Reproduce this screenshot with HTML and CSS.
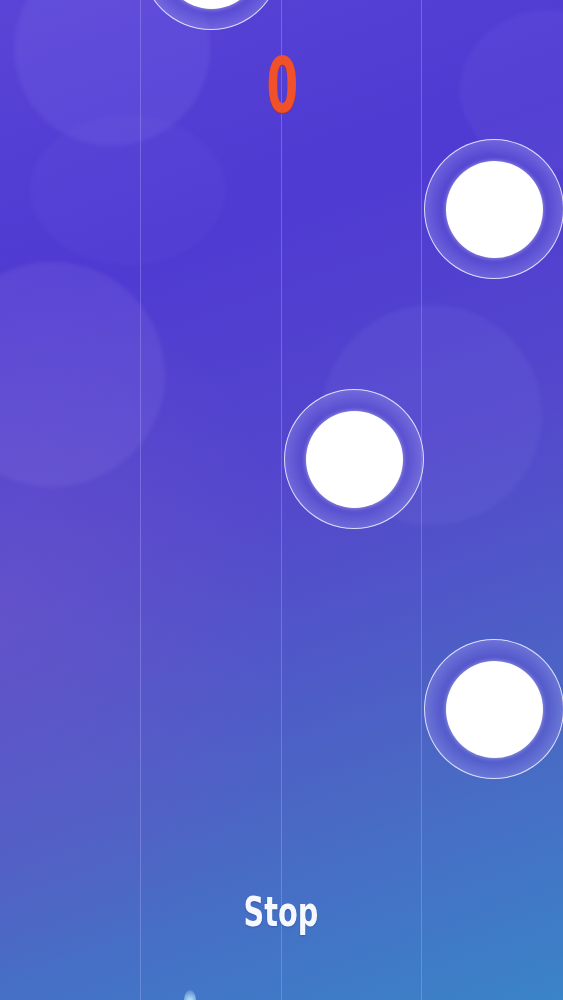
FILE: index.html
```html
<!DOCTYPE html>
<html>
<head>
<meta charset="utf-8">
<link rel="stylesheet" href="styles.css">
</head>
<body>
<div class="stage">
  <div class="bokeh b1"></div>
  <div class="bokeh b2"></div>
  <div class="bokeh b3"></div>
  <div class="bokeh b4"></div>
  <div class="bokeh b5"></div>
  <div class="lanes">
    <div class="lane"></div>
    <div class="lane"></div>
    <div class="lane"></div>
    <div class="lane last"></div>
  </div>
  <div class="note n0"><div class="core"></div></div>
  <div class="note n1"><div class="core"></div></div>
  <div class="note n2"><div class="core"></div></div>
  <div class="note n3"><div class="core"></div></div>
  <div class="score"><span class="digit">0</span></div>
  <div class="stop"><span class="stop-text">Stop</span></div>
  <div class="glow"></div>
</div>
</body>
</html>
```
FILE: styles.css
```css
html, body {
  margin: 0;
  padding: 0;
}
body {
  font-family: "DejaVu Sans", "Liberation Sans", sans-serif;
}
.stage {
  position: relative;
  width: 563px;
  height: 1000px;
  overflow: hidden;
  background:
    radial-gradient(ellipse 420px 520px at 0% 62%, rgba(110, 90, 200, 0.55), rgba(110, 90, 200, 0) 70%),
    linear-gradient(160deg, #5944d6 0%, #4f3ad2 25%, #5448cc 50%, #4b66c4 75%, #3a84c8 100%);
}
.bokeh {
  position: absolute;
  border-radius: 50%;
  background: rgba(140, 130, 240, 0.16);
  filter: blur(2px);
}
.b1 { left: 14px; top: -50px; width: 196px; height: 196px; }
.b2 { left: 30px; top: 115px; width: 196px; height: 150px; background: rgba(140, 130, 240, 0.06); }
.b3 { left: -60px; top: 262px; width: 225px; height: 225px; background: rgba(150, 130, 230, 0.17); }
.b4 { left: 322px; top: 305px; width: 220px; height: 220px; background: rgba(130, 130, 230, 0.13); }
.b5 { left: 460px; top: 10px; width: 180px; height: 160px; background: rgba(140, 130, 240, 0.10); }
.lanes {
  position: absolute;
  inset: 0;
  display: grid;
  grid-template-columns: repeat(4, 1fr);
}
.lane {
  border-right: 1.5px solid rgba(180, 180, 255, 0.34);
}
.lane.last {
  border-right: none;
}
.note {
  position: absolute;
  width: 140px;
  height: 140px;
  border-radius: 50%;
  border: 1.5px solid rgba(235, 235, 255, 0.9);
  background: radial-gradient(circle, rgba(80, 70, 205, 0.55) 0%, rgba(80, 70, 205, 0.55) 50%, rgba(165, 165, 242, 0.5) 80%, rgba(185, 185, 248, 0.55) 100%);
  display: flex;
  align-items: center;
  justify-content: center;
  box-sizing: border-box;
}
.core {
  width: 97px;
  height: 97px;
  border-radius: 50%;
  background: #ffffff;
  box-shadow: 0 0 5px rgba(255, 255, 255, 0.55);
}
.n0 { left: 141px; top: -110px; }
.n1 { left: 424px; top: 139px; }
.n2 { left: 284px; top: 389px; }
.n3 { left: 424px; top: 639px; }
.score {
  position: absolute;
  left: 0;
  right: 0;
  top: 42px;
  display: flex;
  justify-content: center;
}
.digit {
  display: inline-block;
  font-family: "DejaVu Sans", sans-serif;
  font-weight: bold;
  font-size: 76px;
  line-height: 88px;
  color: #f0502a;
  transform: scaleX(0.6);
  text-shadow: 0 1px 0 #b03020;
  margin-left: 2px;
}
.stop {
  position: absolute;
  left: 0;
  right: 0;
  top: 884px;
  display: flex;
  justify-content: center;
}
.stop-text {
  display: inline-block;
  font-family: "DejaVu Sans", sans-serif;
  font-weight: bold;
  font-size: 40px;
  line-height: 56px;
  color: #f6f8ff;
  transform: scaleX(0.72);
  text-shadow: 0 1px 2px rgba(30, 40, 120, 0.35);
}
.glow {
  position: absolute;
  left: 184px;
  top: 990px;
  width: 12px;
  height: 20px;
  border-radius: 50%;
  background: radial-gradient(circle, rgba(200, 240, 255, 0.9), rgba(120, 200, 255, 0));
}
```
